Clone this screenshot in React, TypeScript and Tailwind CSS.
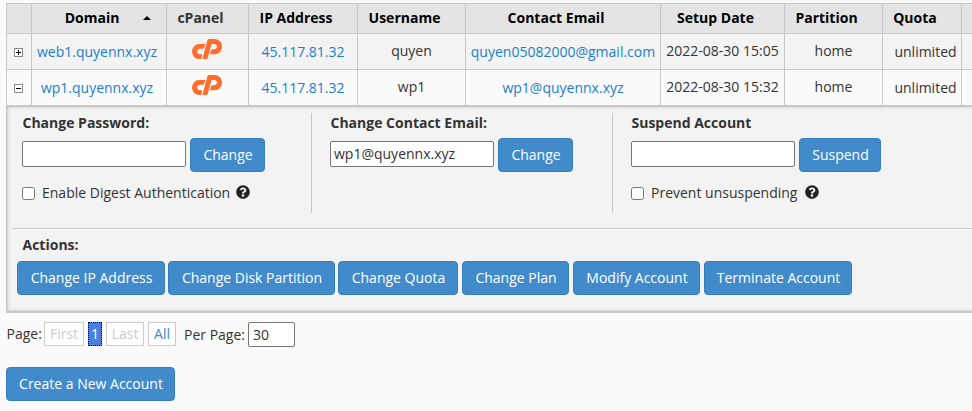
import React from "react";
import { FaQuestionCircle } from "react-icons/fa";

const GRID =
  "grid grid-cols-[25px_135px_82px_109px_108px_195px_124px_98px_79px_11px] border-l border-[#c8c8c8]";
const CELL = "border-r border-[#c8c8c8] text-center whitespace-nowrap";
const LINK = "text-[#1b7fcc]";
const INPUT =
  "box-border rounded-[2px] border border-[#767676] bg-white text-[#333]";

function CpLogo() {
  return (
    <svg viewBox="0 0 358 240" className="h-5 w-[30px]" fill="#ff6c2c">
      <path d="M89.69 59.1h67.8L147 99.3a25.38 25.38 0 0 1-9 13.5 24.32 24.32 0 0 1-15.3 5.1H91.19a30.53 30.53 0 0 0-19 6.3 33 33 0 0 0-11.55 17.1 31.91 31.91 0 0 0-.45 15.3A33.1 33.1 0 0 0 66 169.35a30.29 30.29 0 0 0 10.8 8.85 31.74 31.74 0 0 0 14.4 3.3h19.2a10.8 10.8 0 0 1 8.85 4.35 10.4 10.4 0 0 1 2 9.75l-12 44.4h-21a84.77 84.77 0 0 1-39.75-9.45 89.78 89.78 0 0 1-30-25.05A88.4 88.4 0 0 1 1.06 169.05 87.51 87.51 0 0 1 3 126.6l1.2-4.5A88.69 88.69 0 0 1 35.84 77.4a89.91 89.91 0 0 1 25-13.35A87 87 0 0 1 89.69 59.1Z" />
      <path d="M123.89 240 182.99 18.6a25.38 25.38 0 0 1 9-13.5A24.32 24.32 0 0 1 207.29 0H270a84.77 84.77 0 0 1 39.75 9.45 89.21 89.21 0 0 1 46.65 60.6 83.8 83.8 0 0 1-1.65 42.45l-1.2 4.5a89.88 89.88 0 0 1-12 26.55 87.65 87.65 0 0 1-73.2 39.15h-54.3l10.8-40.5a25.38 25.38 0 0 1 9-13.2 24.32 24.32 0 0 1 15.3-5.1h17.4a31.56 31.56 0 0 0 30.6-23.7 29.39 29.39 0 0 0 .45-14.7 33.1 33.1 0 0 0-5.85-12.75 31.76 31.76 0 0 0-10.8-9 30.64 30.64 0 0 0-14.4-3.45h-33.6l-43.8 162.9a25.38 25.38 0 0 1-9 13.2 23.88 23.88 0 0 1-15 5.1Z" />
    </svg>
  );
}

function Toggle({ open }: { open: boolean }) {
  return (
    <svg width="9" height="9" viewBox="0 0 9 9" shapeRendering="crispEdges" className="mt-[14px] ml-[7px]">
      <rect width="9" height="9" fill="#8a8a8a" />
      <rect x="1" y="1" width="7" height="7" fill="#fff" />
      <rect x="2" y="4" width="5" height="1" fill="#000" />
      {!open && <rect x="4" y="2" width="1" height="5" fill="#000" />}
    </svg>
  );
}

function Button({ children, className = "" }: { children: React.ReactNode; className?: string }) {
  return (
    <button
      className={`h-[34px] shrink-0 rounded-[4px] border border-[#357ebd] bg-[#428bca] pl-px text-center leading-5 whitespace-nowrap text-white ${className}`}
    >
      {children}
    </button>
  );
}

function Head({ children, className = "text-black" }: { children?: React.ReactNode; className?: string }) {
  return <div className={`${CELL} pt-1 pr-[14px] font-bold ${className}`}>{children}</div>;
}

type Account = { domain: string; user: string; email: string; date: string; open: boolean };

const accounts: Account[] = [
  { domain: "web1.quyennx.xyz", user: "quyen", email: "quyen05082000@gmail.com", date: "2022-08-30 15:05", open: false },
  { domain: "wp1.quyennx.xyz", user: "wp1", email: "wp1@quyennx.xyz", date: "2022-08-30 15:32", open: true },
];

function Row({ a, last }: { a: Account; last: boolean }) {
  return (
    <div className={`${GRID} ${last ? "h-[35px] bg-[#fafafa]" : "h-9 border-b bg-[#f3f3f3]"}`}>
      <div className={CELL}><Toggle open={a.open} /></div>
      <div className={`${CELL} ${LINK} pt-2 pr-1`}>{a.domain}</div>
      <div className={`${CELL} flex justify-center pt-[5px] pr-[2px]`}><CpLogo /></div>
      <div className={`${CELL} ${LINK} pt-2`}>45.117.81.32</div>
      <div className={`${CELL} pt-[7px]`}>{a.user}</div>
      <div className={`${CELL} ${LINK} pt-2`}>{a.email}</div>
      <div className={`${CELL} pt-[7px]`}>{a.date}</div>
      <div className={`${CELL} pt-[7px]`}>home</div>
      <div className={`${CELL} pt-2 pl-[7px]`}>unlimited</div>
      <div />
    </div>
  );
}

function Check({ label, gap }: { label: string; gap: string }) {
  return (
    <label className={`mt-[11px] flex items-center whitespace-nowrap ${gap}`}>
      <span className="size-[13px] rounded-[2.5px] border border-[#767676] bg-white" />
      <span>{label}</span>
      <FaQuestionCircle className="-mt-[3px] size-[14px] text-[#222]" />
    </label>
  );
}

export default function App() {
  return (
    <div className="h-[411px] w-[972px] overflow-hidden bg-[#fafafa] pt-[3px] pl-[6px] font-['Open_Sans','Noto_Sans',sans-serif] text-[14px] leading-5 text-[#333]">
      <div className={`${GRID} h-[31px] border-y bg-[#e4e4e4]`}>
        <Head />
        <div className={`${CELL} flex pt-1 pl-8 font-bold text-black`}>
          <span className="w-[56px]">Domain</span>
          <svg width="8" height="4" viewBox="0 0 8 4" className="mt-[8px] ml-[23px]">
            <path d="M4 0 8 4H0Z" fill="#000" />
          </svg>
        </div>
        <Head className="text-[#333]">cPanel</Head>
        <Head>IP Address</Head>
        <Head>Username</Head>
        <Head>Contact Email</Head>
        <Head>Setup Date</Head>
        <Head>Partition</Head>
        <Head>Quota</Head>
        <div />
      </div>
      {accounts.map((a, i) => (
        <Row key={a.domain} a={a} last={i === accounts.length - 1} />
      ))}

      <section className="-mr-2 h-[208px] border border-[#c8c8c8] bg-[#f3f3f3] pt-[7px] pl-[5px] shadow-[inset_0_-1px_1px_#c4c4c4,inset_0_1px_1px_#c4c4c4,inset_0_0_4px_#bbb]">
        <div className="flex h-[100px]">
          <div className="w-[300px] border-r border-[#c8c8c8] pl-[10px]">
            <h3 className="pl-[0.5px] font-bold">Change Password:</h3>
            <div className="mt-[5px] flex h-[34px] items-center">
              <div className={`${INPUT} mt-[-2px] mr-1 h-[26px] w-[164px]`} />
              <Button className="w-[75px]">Change</Button>
            </div>
            <Check label="Enable Digest Authentication" gap="gap-[7px] [&>svg]:-ml-[1px]" />
          </div>
          <div className="w-[301px] border-r border-[#c8c8c8] pl-[18px]">
            <h3 className="pl-[0.5px] font-bold">Change Contact Email:</h3>
            <div className="mt-[5px] flex h-[34px] items-center">
              <div className={`${INPUT} mt-[-2px] mr-1 h-[26px] w-[164px] pl-[3px] leading-[23px]`}>wp1@quyennx.xyz</div>
              <Button className="w-[75px]">Change</Button>
            </div>
          </div>
          <div className="pl-[18px]">
            <h3 className="pl-[0.5px] font-bold">Suspend Account</h3>
            <div className="mt-[5px] flex h-[34px] items-center">
              <div className={`${INPUT} mt-[-2px] mr-1 h-[26px] w-[164px]`} />
              <Button className="w-[82px]">Suspend</Button>
            </div>
            <Check label="Prevent unsuspending" gap="gap-[7px] [&>svg]:ml-[1px]" />
          </div>
        </div>
        <div className="mt-[15px] h-[2px] border-t border-b border-t-[#c8c8c8] border-b-white" />
        <h3 className="mt-[5px] pl-[10.5px] font-bold">Actions:</h3>
        <div className="mt-[6px] flex pl-[5px]">
          <Button className="mr-[3px] w-[148px]">Change IP Address</Button>
          <Button className="mr-[3px] w-[167px]">Change Disk Partition</Button>
          <Button className="mr-1 w-[120px]">Change Quota</Button>
          <Button className="mr-1 w-[107px]">Change Plan</Button>
          <Button className="mr-1 w-[127px]">Modify Account</Button>
          <Button className="w-[148px]">Terminate Account</Button>
        </div>
      </section>

      <div className="mt-[9px] flex h-[25px] whitespace-nowrap">
        <span className="w-[38px] pt-[2px] pl-[0.5px]">Page:</span>
        <span className="mr-1 h-6 w-10 border border-[#ccc] bg-white pt-px text-center text-[#ccc]">First</span>
        <span className="mr-1 h-6 w-[14px] border border-dotted border-black bg-[#4a7fe0] pt-px text-center text-white">1</span>
        <span className="mr-1 h-6 w-[38px] border border-[#ccc] bg-white pt-px text-center text-[#ccc]">Last</span>
        <span className="h-6 w-7 border border-[#ccc] bg-white pt-px text-center text-[#428bca]">All</span>
        <span className="w-[72px] pt-[3px] pl-2">Per Page:</span>
        <div className={`${INPUT} h-[25px] w-[47px] pl-[4px] leading-[23px]`}>30</div>
      </div>

      <Button className="mt-5 w-[169px]">Create a New Account</Button>
    </div>
  );
}
